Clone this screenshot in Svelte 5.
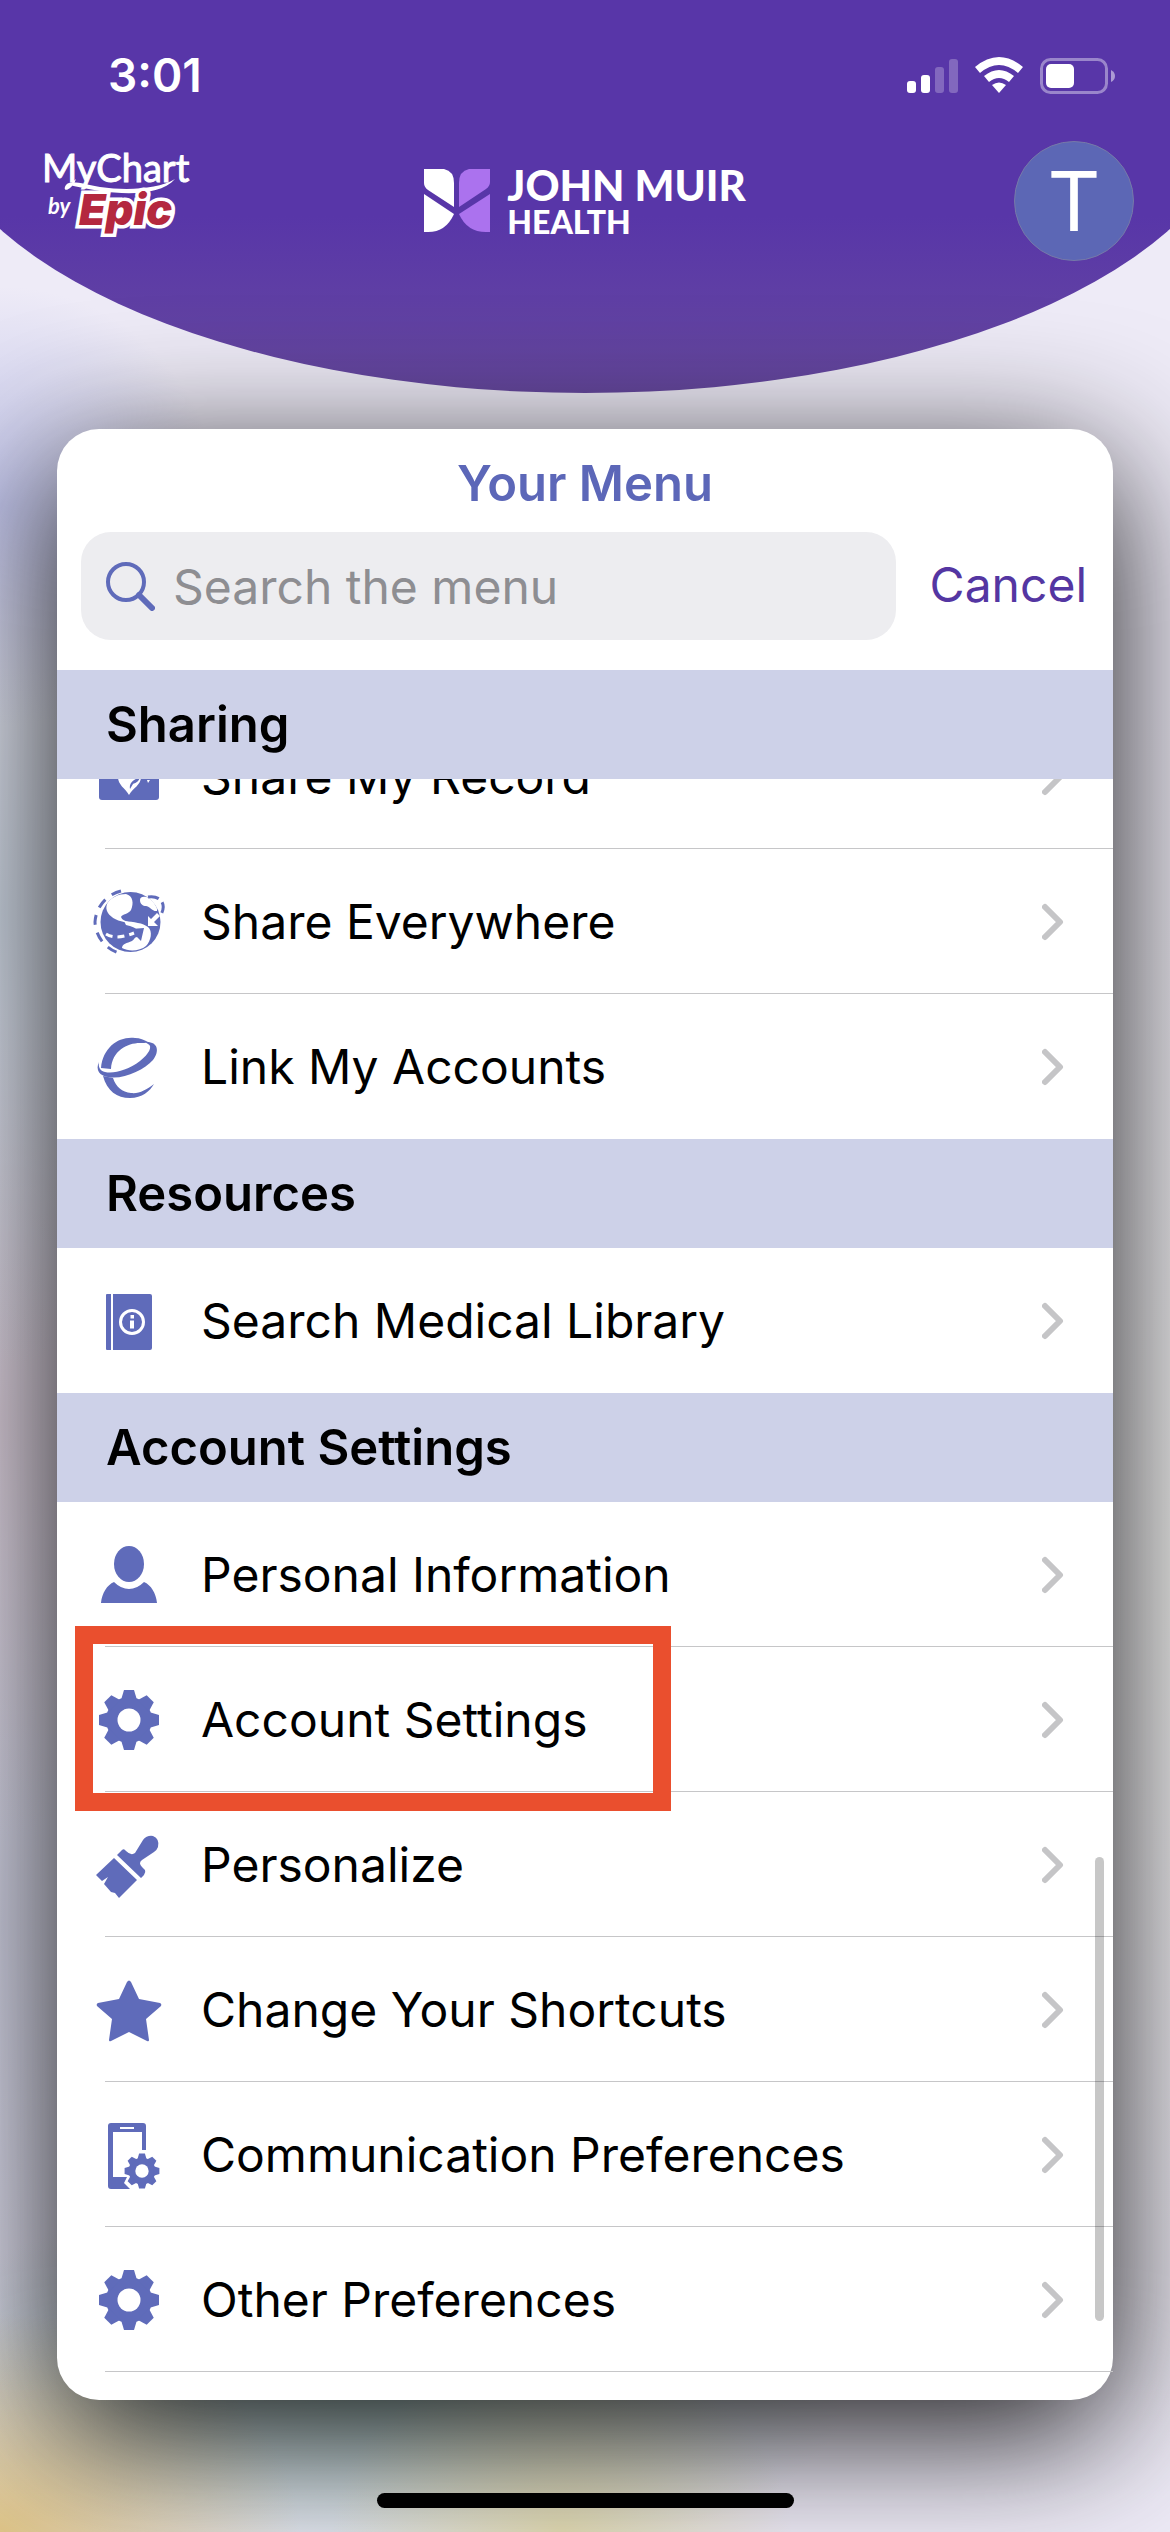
<script lang="ts">
    type Item = { icon: string; label: string; highlighted?: boolean };
    type Section = { title: string; items: Item[]; scrolled?: boolean };

    let query = $state("");

    const sections: Section[] = [
        {
            title: "Sharing",
            scrolled: true,
            items: [
                { icon: "record", label: "Share My Record" },
                { icon: "globe", label: "Share Everywhere" },
                { icon: "link", label: "Link My Accounts" }
            ]
        },
        {
            title: "Resources",
            items: [{ icon: "book", label: "Search Medical Library" }]
        },
        {
            title: "Account Settings",
            items: [
                { icon: "person", label: "Personal Information" },
                { icon: "gear", label: "Account Settings", highlighted: true },
                { icon: "brush", label: "Personalize" },
                { icon: "star", label: "Change Your Shortcuts" },
                { icon: "phone", label: "Communication Preferences" },
                { icon: "gear", label: "Other Preferences" }
            ]
        }
    ];

    const teeth = [0, 45, 90, 135, 180, 225, 270, 315];
</script>

{#snippet gear()}
    <circle r="23" />
    {#each teeth as angle}
        <path d="M-8-20L-5-30H5L8-20Z" transform="rotate({angle})" />
    {/each}
    <circle r="11.5" class="cut" />
{/snippet}

{#snippet icon(name: string)}
    <svg class="icon" viewBox="0 0 76 76" aria-hidden="true">
        {#if name === "record"}
            <rect x="8" y="15" width="60" height="46" rx="3" />
            <path class="cut" d="M38 56C34 49 27 46 27 38C27 30 35 28 38 34C41 28 50 30 50 38C50 46 42 49 38 56Z" />
            <path d="M39 50C38 45 41 41 49 38C48 43 44 44 42 45Z" />
            <path class="cut" d="M56 41l3 0l-2 3z" />
        {:else if name === "globe"}
            <circle cx="39.5" cy="38" r="30" />
            <path class="cut" d="M16 20C20 13 28 10 35 10C42 12 43 19 40 26C38 30 31 30 30 33C31 36 34 37 38 38C30 39 20 34 17 29C15 26 15 23 16 20Z" />
            <path class="cut" d="M49 16C49 12 54 12 58 14C64 19 67 25 66 27C62 28 58 22 55 22C52 22 49 20 49 16Z" />
            <path class="cut" d="M33 37C43 38 52 39 57 43C62 47 60 57 55 62C49 67 38 68 31 64C31 60 36 59 41 57C44 55 45 51 47 49C47 44 40 42 35 41Z" />
            <path class="cut" d="M57 32L60 35L66 29L69 32L63 38L67 42L57 42Z" />
            <path d="M40 45L53 44L50 57L46 53L39 55L38 51L43 49Z" />
            <path class="cut-line" d="M15 50C23 55 33 53 43 49" stroke-dasharray="7 5" />
            <path class="line" d="M30 7A34 34 0 0 0 4 38A34 34 0 0 0 32 70" stroke-dasharray="10 8" />
            <path class="line" d="M57 13C69 11 77 20 69 32" stroke-dasharray="11 5" />
        {:else if name === "link"}
            <path d="M10 39C12 18 28 7 44 9C49 9 53 11 57 13C55 14 52 14 49 14C36 14 21 22 20 40Z" />
            <path fill-rule="evenodd" d="M8 33C4 41 9 47 17 48C32 51 53 41 62 31C69 22 67 12 54 13L57 15C62 17 58 25 49 32C37 41 23 45 14 43C9 42 7 38 8 33Z" />
            <path d="M12 47C16 62 26 69 39 69C51 69 59 62 63 55C55 61 48 65 40 64C31 63 25 58 22 49Z" />
        {:else if name === "book"}
            <path d="M16 11H20V67H16Q15 67 15 66V12Q15 11 16 11ZM22 11H59Q61 11 61 13V65Q61 67 59 67H22Z" />
            <circle class="cut-line" cx="41" cy="39" r="11.5" />
            <path class="cut" d="M39.5 32h3.5v3.5h-3.5zM39 37.5h4v8h-4z" />
        {:else if name === "person"}
            <ellipse cx="38" cy="27" rx="15" ry="18" />
            <path d="M10 66C11 56 16 48 23 45Q30 52 38 52Q46 52 53 45C60 48 65 56 66 66Z" />
        {:else if name === "gear"}
            <g transform="translate(38 38)">{@render gear()}</g>
        {:else if name === "brush"}
            <path d="M26 28L31 23Q33 21 35 24Q40 29 44 26L52 13Q56 8 62 9Q69 12 67 20Q66 23 63 25L51 33Q47 36 51 40L54 43Q55 45 53 48L50 51Z" />
            <path d="M23 31L46 53L28 71L24 66L20 65L13 57L17 50L11 54L5 48Z" />
        {:else if name === "star"}
            <path d="M36 10Q38 7 40 10L48 27L69 31Q71 32 70 34L55 47L58 68Q58 70 56 69L38 60L20 69Q18 70 18 68L21 47L6 34Q5 32 7 31L28 27Z" />
        {:else if name === "phone"}
            <path fill-rule="evenodd" d="M20 6H52Q55 6 55 9V72H20Q17 72 17 69V9Q17 6 20 6ZM22 15V60H51V15ZM29 10V12H43V10Z" />
            <path class="cut" d="M49 33H58V74H41L33 66L36 60L33 52Z" />
            <g transform="translate(51 54) scale(0.58)">{@render gear()}</g>
        {/if}
    </svg>
{/snippet}

<div class="screen">
    <header>
        <div class="status">
            <time>3:01</time>
            <svg class="indicators" viewBox="0 0 208 38" aria-hidden="true">
                <rect x="0" y="25" width="9" height="12" rx="3" />
                <rect x="14" y="19" width="9" height="18" rx="3" />
                <rect x="28" y="11" width="9" height="26" rx="3" opacity="0.25" />
                <rect x="42" y="3" width="9" height="34" rx="3" opacity="0.25" />
                <path d="M68 11Q92-9 116 11L111 17Q92 1 73 17ZM77 20Q92 8 107 20L102 26Q92 18 82 26ZM85 29Q92 24 99 29L92 37Z" />
                <rect x="134.5" y="3.5" width="65" height="33" rx="9" fill="none" stroke="#fff" stroke-width="3" opacity="0.4" />
                <rect x="139" y="8" width="28" height="24" rx="5" />
                <path d="M204 14Q208 16 208 20Q208 24 204 26Z" opacity="0.5" />
            </svg>
        </div>
        <div class="brand">
            <svg class="mychart" viewBox="0 0 150 96" role="img" aria-label="MyChart by Epic">
                <text class="my" x="0" y="29">MyChart</text>
                <path d="M34 26C30 38 19 40 24 32C28 26 42 31 58 34C86 38 116 36 133 26C119 42 86 42 58 38C46 36 36 34 27 32" />
                <text class="by" x="6" y="61">by</text>
                <text class="epic" x="37" y="72">Epic</text>
            </svg>
            <div class="hospital">
                <svg viewBox="0 0 66 64" aria-hidden="true">
                    <path d="M0 0H20Q30 2 30 14V38L4 21Q0 18 0 14Z" fill="#fff" />
                    <path d="M0 25L30 45Q22 63 4 63H0Z" fill="#fff" />
                    <path d="M66 0H45Q35 2 35 14V38L62 20Q66 17 66 13Z" fill="#ab72ee" />
                    <path d="M66 25L35 45Q43 63 62 63H66Z" fill="#ab72ee" />
                </svg>
                <div class="wordmark">
                    <span class="john">JOHN MUIR</span>
                    <span class="health">HEALTH</span>
                </div>
            </div>
            <button class="avatar" aria-label="Profile">T</button>
        </div>
    </header>

    <main>
        <h1>Your Menu</h1>
        <form class="search">
            <label>
                <svg viewBox="0 0 50 50" aria-hidden="true">
                    <circle cx="21" cy="21" r="18" />
                    <path d="M34 34L47 47" />
                </svg>
                <input type="text" placeholder="Search the menu" aria-label="Search the menu" bind:value={query} />
            </label>
            <button type="button">Cancel</button>
        </form>

        {#each sections as section}
            <section class:scrolled={section.scrolled}>
                <h2>{section.title}</h2>
                <ul>
                    {#each section.items as item}
                        <li class:highlighted={item.highlighted}>
                            <a href="#menu">
                                {@render icon(item.icon)}
                                <span>{item.label}</span>
                                <svg class="chevron" viewBox="0 0 22 38" aria-hidden="true">
                                    <path d="M3 4L18 19L3 34" />
                                </svg>
                            </a>
                        </li>
                    {/each}
                </ul>
            </section>
        {/each}
        <div class="scrollbar"></div>
    </main>
    <div class="home"></div>
</div>

<style>
    :global(body) {
        margin: 0;
    }

    .screen {
        display: flex;
        flex-direction: column;
        min-height: 100vh;
        overflow: hidden;
        font-family: Inter, "Liberation Sans", sans-serif;
        background:
            radial-gradient(ellipse 300px 220px at 0 100%, #dfc588, transparent),
            radial-gradient(ellipse 230px 180px at 48% 100%, #e3dcb4, transparent),
            radial-gradient(ellipse 480px 200px at 32% 94%, #b3d0cd, transparent),
            radial-gradient(ellipse 220px 220px at 0 20%, #c3c6ec, transparent),
            radial-gradient(ellipse 200px 460px at 0 36%, #d0d9e6, transparent),
            radial-gradient(ellipse 200px 420px at 0 56%, #dbcfdc, transparent),
            radial-gradient(ellipse 200px 900px at 0 76%, #d3d4e6, transparent),
            radial-gradient(ellipse 160px 900px at 100% 62%, #efefee, transparent),
            #eeebf7;
    }

    header {
        height: 393px;
        color: #fff;
        background: linear-gradient(#5836a8 55%, #6749a0);
        clip-path: ellipse(56.4% 305px at 50% 88px);
    }

    .status {
        display: flex;
        justify-content: space-between;
        align-items: center;
        height: 141px;
        box-sizing: border-box;
        padding: 8px 55px 0 108px;
    }

    time {
        font-size: 46px;
        font-weight: 600;
    }

    .indicators {
        width: 208px;
        fill: #fff;
    }

    .brand {
        display: grid;
        grid-template-columns: 1fr auto 1fr;
        align-items: center;
        padding: 0 36px;
    }

    .mychart {
        width: 150px;
        margin-left: 6px;
        overflow: visible;
        fill: #fff;
    }

    .my {
        font: 38px Lato, sans-serif;
        stroke: #fff;
        stroke-width: 1px;
    }

    .by {
        font: italic bold 22px Lato, sans-serif;
    }

    .epic {
        font: italic 900 43px Inter, sans-serif;
        fill: #b4283f;
        stroke: #fff;
        stroke-width: 7px;
        paint-order: stroke;
    }

    .hospital {
        display: flex;
        gap: 17px;
    }

    .hospital svg {
        width: 66px;
    }

    .wordmark {
        display: flex;
        flex-direction: column;
        gap: 10px;
        font-family: Lato, sans-serif;
        font-weight: 900;
    }

    .john {
        font-size: 42px;
        line-height: 32px;
    }

    .health {
        font-size: 32px;
        line-height: 22px;
    }

    .avatar {
        justify-self: end;
        width: 120px;
        height: 120px;
        padding: 0;
        border: 1px solid #7679a8;
        border-radius: 50%;
        font: 82px Inter, sans-serif;
        color: #fff;
        background: #5c67b5;
    }

    main {
        position: relative;
        margin: 36px 57px 0;
        padding-bottom: 28px;
        border-radius: 42px;
        background: #fff;
        box-shadow: 0 34px 140px rgba(0, 0, 0, 0.9);
    }

    h1 {
        margin: 0;
        padding: 25px 0 18px;
        font-size: 49px;
        line-height: 60px;
        font-weight: 600;
        text-align: center;
        color: #5c67b8;
    }

    .search {
        display: flex;
        gap: 34px;
        padding: 0 26px 30px 24px;
    }

    .search label {
        display: flex;
        align-items: center;
        flex: 1;
        gap: 18px;
        min-width: 0;
        height: 108px;
        box-sizing: border-box;
        padding: 0 24px;
        border-radius: 30px;
        background: #ededf0;
    }

    .search svg {
        flex: none;
        width: 50px;
        fill: none;
        stroke: #5f6bba;
        stroke-width: 4;
        stroke-linecap: round;
    }

    .search path {
        stroke-width: 6;
    }

    .search input {
        flex: 1;
        min-width: 0;
        padding: 0;
        border: 0;
        outline: 0;
        font: 48px Inter, sans-serif;
        color: #000;
        background: none;
    }

    .search input::placeholder {
        color: #8e8e92;
        opacity: 1;
    }

    .search button {
        padding: 0 0 4px;
        border: 0;
        font: 48px Inter, sans-serif;
        color: #5436a2;
        background: none;
    }

    h2 {
        position: relative;
        z-index: 1;
        margin: 0;
        padding: 0 49px;
        font-size: 49px;
        line-height: 109px;
        font-weight: 600;
        background: #cdd1e8;
    }

    ul {
        margin: 0;
        padding: 0;
        list-style: none;
    }

    /* the first row is partly scrolled under its section header */
    .scrolled ul {
        margin-top: -75px;
    }

    li {
        position: relative;
    }

    li a {
        display: flex;
        align-items: center;
        gap: 34px;
        height: 145px;
        padding: 0 49px 0 34px;
        font-size: 48px;
        color: #000;
        text-decoration: none;
        background: linear-gradient(#c6c6c8, #c6c6c8) 48px 100% / 100% 1px no-repeat;
    }

    section:not(:last-of-type) li:last-child a {
        background: none;
    }

    li span {
        flex: 1;
        white-space: nowrap;
    }

    .icon {
        width: 76px;
        height: 76px;
        fill: #5f6bba;
    }

    .icon .cut {
        fill: #fff;
    }

    .icon .cut-line {
        fill: none;
        stroke: #fff;
        stroke-width: 3;
    }

    .icon .line {
        fill: none;
        stroke: #5f6bba;
        stroke-width: 3;
    }

    .chevron {
        width: 22px;
        fill: none;
        stroke: #c5c5c7;
        stroke-width: 6;
        stroke-linecap: round;
        stroke-linejoin: round;
    }

    .highlighted::after {
        content: "";
        position: absolute;
        z-index: 1;
        inset: -21px auto -19px 18px;
        width: 560px;
        border: 18px solid #ea4f2e;
    }

    .scrollbar {
        position: absolute;
        right: 9px;
        bottom: 79px;
        width: 9px;
        height: 464px;
        border-radius: 5px;
        background: rgba(0, 0, 0, 0.22);
    }

    .home {
        position: relative;
        width: 417px;
        height: 15px;
        margin: 93px auto 24px;
        border-radius: 8px;
        background: #000;
    }
</style>
